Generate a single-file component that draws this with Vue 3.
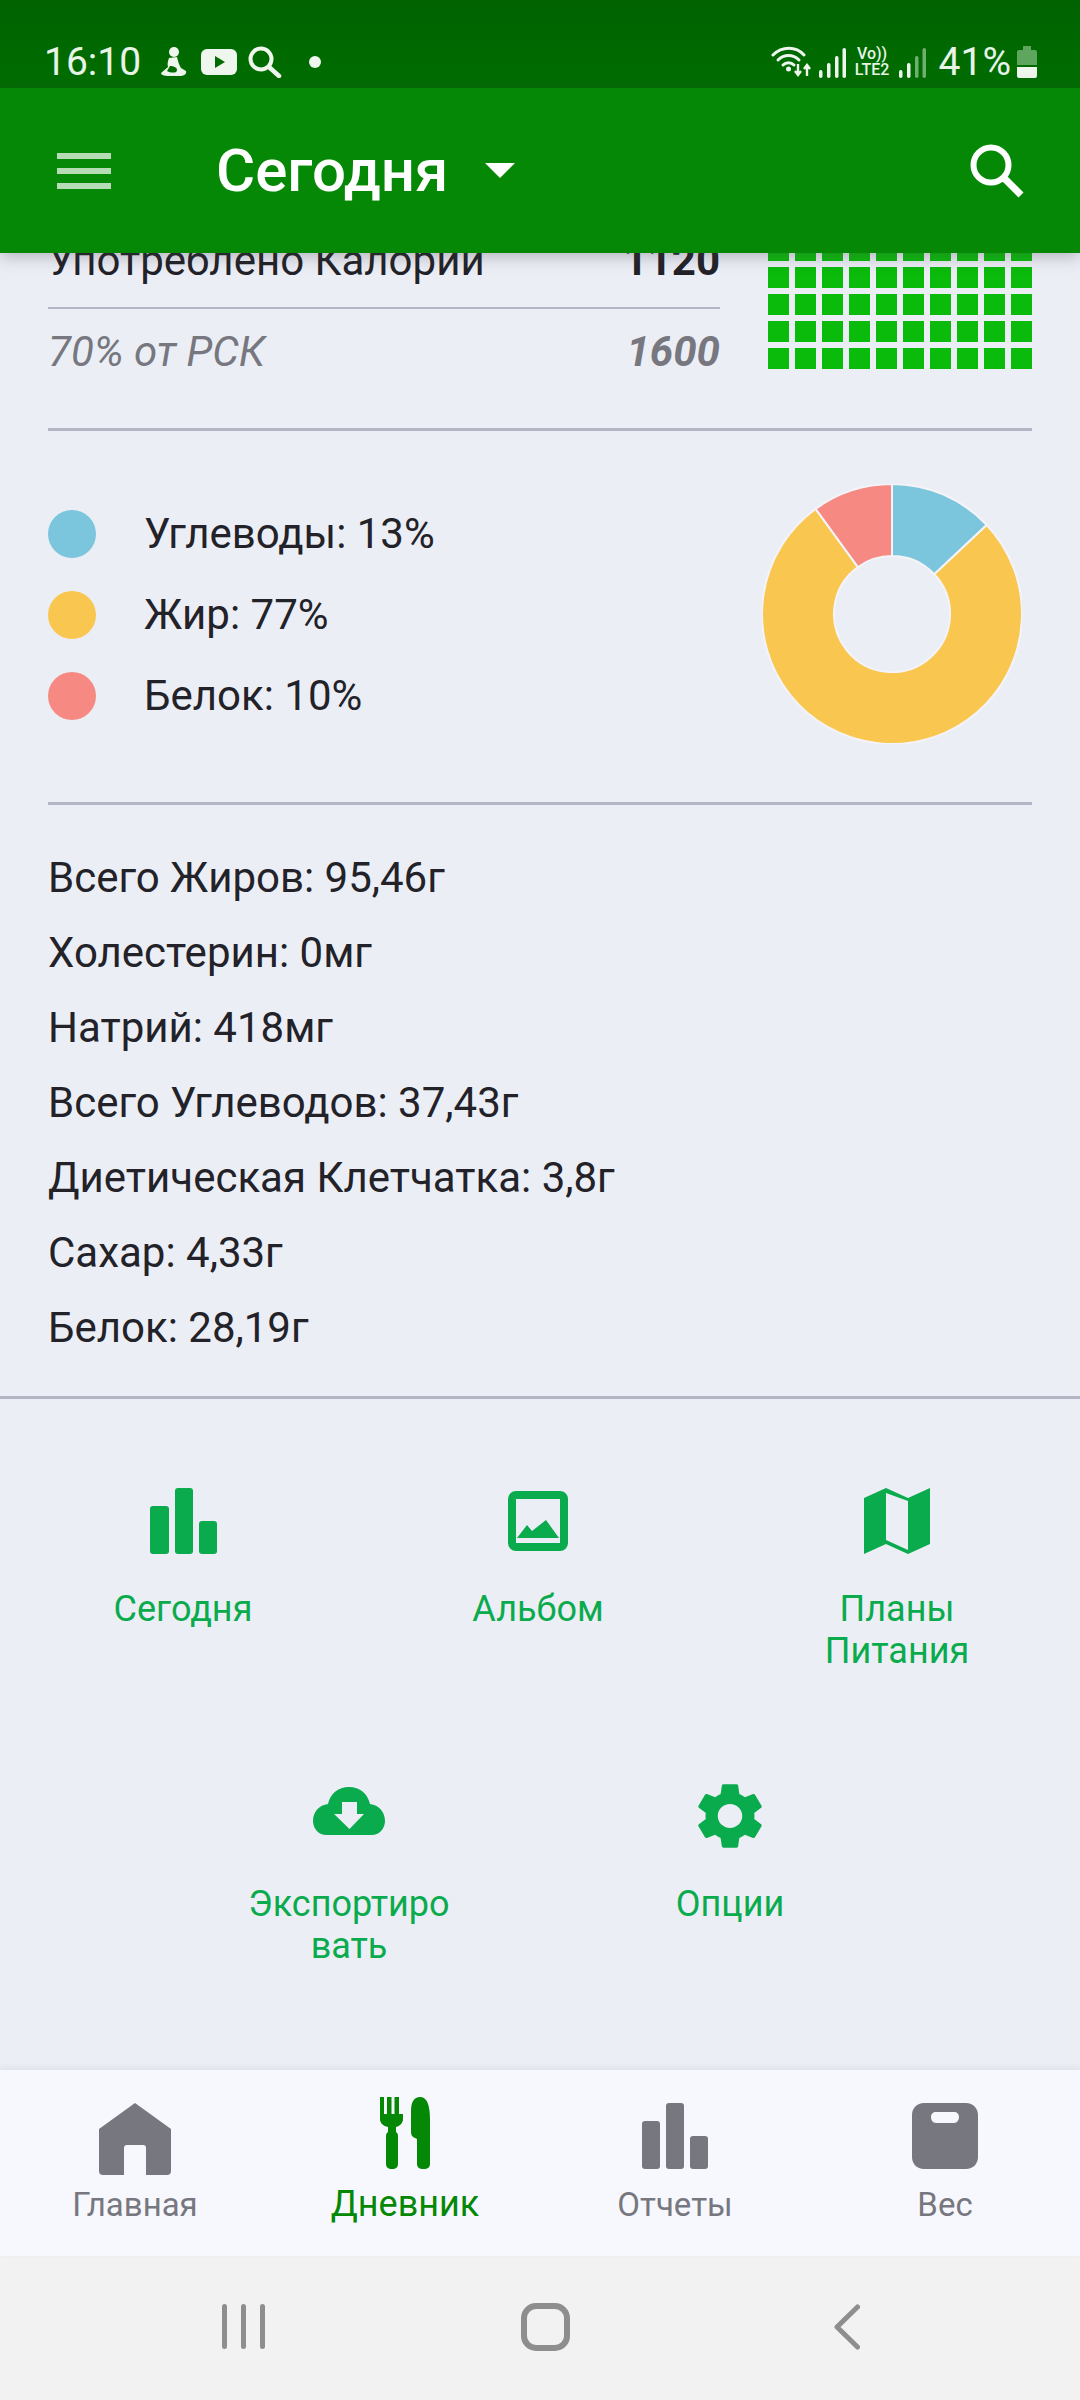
<script setup>
const macros = [
  { name: 'Углеводы', pct: 13, color: '#7bc5dd' },
  { name: 'Жир', pct: 77, color: '#f9c74f' },
  { name: 'Белок', pct: 10, color: '#f68a83' }
]

const nutrients = [
  'Всего Жиров: 95,46г',
  'Холестерин: 0мг',
  'Натрий: 418мг',
  'Всего Углеводов: 37,43г',
  'Диетическая Клетчатка: 3,8г',
  'Сахар: 4,33г',
  'Белок: 28,19г'
]

const cells = Array.from({ length: 50 }, (_, i) => i)

// donut slices, clockwise from 12 o'clock
const R = 130
const r = 58
function pt(rad, a) {
  return `${(130 + rad * Math.sin(a)).toFixed(2)} ${(130 - rad * Math.cos(a)).toFixed(2)}`
}
let acc = 0
const slices = macros.map(m => {
  const a0 = acc * Math.PI * 2
  acc += m.pct / 100
  const a1 = acc * Math.PI * 2
  const big = m.pct > 50 ? 1 : 0
  return {
    color: m.color,
    d: `M${pt(R, a0)}A${R} ${R} 0 ${big} 1 ${pt(R, a1)}L${pt(r, a1)}A${r} ${r} 0 ${big} 0 ${pt(r, a0)}Z`
  }
})
</script>

<template>
  <div class="phone">
    <div class="statusbar">
      <span class="time">16:10</span>
      <svg class="st-person" width="26" height="30" viewBox="0 0 26 30">
        <circle cx="13" cy="5" r="5" fill="#eef6ee" />
        <path fill="#eef6ee" d="M8 11l8-1c1 4 2 8 4 11l5 3c1 3-2 5-7 5H8c-5 0-8-1-8-3l7-6c-1-3 0-6 1-9z" />
        <path fill="#006c00" d="M9 19c3 0 7 1 7 4s-4 3-8 2l-2-1z" />
      </svg>
      <svg class="st-yt" width="36" height="26" viewBox="0 0 36 26">
        <rect width="36" height="26" rx="6" fill="#eef6ee" />
        <path d="M14 7l10 6-10 6z" fill="#006c00" />
      </svg>
      <svg class="st-search" width="34" height="32" viewBox="0 0 34 32">
        <circle cx="13" cy="13" r="10.500" fill="none" stroke="#eef6ee" stroke-width="4" />
        <path d="M21 21l10 9" stroke="#eef6ee" stroke-width="4.500" stroke-linecap="round" />
      </svg>
      <span class="st-dot"></span>
      <span class="st-spacer"></span>
      <svg class="st-wifi" width="42" height="32" viewBox="0 0 42 32">
        <g fill="none" stroke="#eef6ee" stroke-width="3" stroke-linecap="round">
          <path d="M2 9C11 0 25 0 33 9" />
          <path d="M7 14c6-6 15-6 21 0" />
          <path d="M12 19c3-3 8-3 11 0" />
        </g>
        <circle cx="17.500" cy="23" r="2.500" fill="#eef6ee" />
        <path d="M27 18v11M24 25l3 4 3-4M36 30V19M33 23l3-4 3 4" fill="none" stroke="#eef6ee" stroke-width="2.400" />
      </svg>
      <svg class="st-signal" width="27" height="30" viewBox="0 0 27 30">
        <rect x="0" y="22" width="3.500" height="8" rx="1.700" fill="#eef6ee" />
        <rect x="8" y="15" width="3.500" height="15" rx="1.700" fill="#eef6ee" />
        <rect x="16" y="8" width="3.500" height="22" rx="1.700" fill="#eef6ee" />
        <rect x="23.500" y="0" width="3.500" height="30" rx="1.700" fill="#eef6ee" />
      </svg>
      <span class="st-volte"><span>Vo))</span><span>LTE2</span></span>
      <svg class="st-signal2" width="27" height="30" viewBox="0 0 27 30">
        <rect x="0" y="22" width="3.500" height="8" rx="1.700" fill="#eef6ee" />
        <rect x="8" y="15" width="3.500" height="15" rx="1.700" fill="#eef6ee" />
        <rect x="16" y="8" width="3.500" height="22" rx="1.700" fill="#6fb06f" />
        <rect x="23.500" y="0" width="3.500" height="30" rx="1.700" fill="#6fb06f" />
      </svg>
      <span class="pct">41%</span>
      <svg class="st-batt" width="20" height="32" viewBox="0 0 20 32">
        <path d="M6 0h8v4h4a2 2 0 0 1 2 2v13H0V6a2 2 0 0 1 2-2h4z" fill="#5ea65e" />
        <path d="M0 21h20v9a2 2 0 0 1-2 2H2a2 2 0 0 1-2-2z" fill="#eef6ee" />
      </svg>
    </div>

    <header class="appbar">
      <div class="burger"><i></i><i></i><i></i></div>
      <span class="title">Сегодня</span>
      <span class="caret"></span>
      <span class="st-spacer"></span>
      <svg class="ab-search" width="54" height="54" viewBox="0 0 54 54">
        <circle cx="21" cy="21" r="17.500" fill="none" stroke="#fff" stroke-width="6" />
        <path d="M33 33l18 18" stroke="#fff" stroke-width="7" />
      </svg>
    </header>

    <main class="content">
      <div class="scroll">
        <section class="summary">
          <div class="sum-left">
            <div class="sum-row used"><span>Употреблено Калории</span><b>1120</b></div>
            <div class="sum-row rsk"><span>70% от РСК</span><b>1600</b></div>
          </div>
          <div class="cal-grid">
            <i v-for="c in cells" :key="c"></i>
          </div>
        </section>

        <section class="macros">
          <ul class="legend">
            <li v-for="m in macros" :key="m.name">
              <span class="swatch" :style="{ background: m.color }"></span>
              <span>{{ m.name }}: {{ m.pct }}%</span>
            </li>
          </ul>
          <svg class="donut" width="260" height="260" viewBox="0 0 260 260">
            <path v-for="s in slices" :key="s.color" :d="s.d" :fill="s.color" stroke="#f4f4f8" stroke-width="2" />
          </svg>
        </section>

        <section class="nutrients">
          <p v-for="n in nutrients" :key="n">{{ n }}</p>
        </section>

        <section class="actions">
          <div class="act-row first">
            <div class="act">
              <svg width="67" height="66" viewBox="0 0 67 66">
                <rect x="0" y="18" width="19" height="48" rx="3" />
                <rect x="25" y="0" width="18" height="66" rx="3" />
                <rect x="49" y="33" width="18" height="33" rx="3" />
              </svg>
              <span>Сегодня</span>
            </div>
            <div class="act">
              <svg width="60" height="66" viewBox="0 0 60 66">
                <rect x="4" y="7" width="52" height="52" rx="4" fill="none" stroke="#0aab4d" stroke-width="8" />
                <path d="M9 50l10-13 5 6 14-11 13 18z" />
              </svg>
              <span>Альбом</span>
            </div>
            <div class="act">
              <svg width="66" height="66" viewBox="0 0 66 66">
                <path fill-rule="evenodd" d="M0 10L22 0l22 10L66 0v56L44 66 22 56 0 66zM22 5v47l22 10V13z" />
              </svg>
              <span>Планы Питания</span>
            </div>
          </div>
          <div class="act-row second">
            <div class="act">
              <svg width="72" height="66" viewBox="0 0 72 66">
                <path d="M36 4c11 0 19 7 21 17 9 1 15 8 15 17 0 6-4 14-14 14H14C4 52 0 44 0 38c0-9 6-16 15-17C17 11 25 4 36 4z" />
                <path d="M29 19h15v12h7L36.500 46 21 31h8z" fill="#eceef6" />
              </svg>
              <span>Экспортировать</span>
            </div>
            <div class="act">
              <svg width="68" height="66" viewBox="2 2 20 20" preserveAspectRatio="none">
                <path d="M19.14 12.94c.04-.3.06-.61.06-.94 0-.32-.02-.64-.07-.94l2.03-1.58c.18-.14.23-.41.12-.61l-1.92-3.32c-.12-.22-.37-.29-.59-.22l-2.39.96c-.5-.38-1.03-.7-1.62-.94l-.36-2.54c-.04-.24-.24-.41-.48-.41h-3.84c-.24 0-.43.17-.47.41l-.36 2.54c-.59.24-1.13.57-1.62.94l-2.39-.96c-.22-.08-.47 0-.59.22L2.74 8.870c-.12.21-.08.47.12.61l2.030 1.580c-.05.3-.09.63-.09.94s.02.64.07.94l-2.030 1.580c-.18.14-.23.41-.12.61l1.920 3.320c.12.22.37.29.59.22l2.390-.96c.5.38 1.030.7 1.620.94l.36 2.540c.05.24.24.41.48.41h3.840c.24 0 .44-.17.47-.41l.36-2.540c.59-.24 1.130-.56 1.620-.94l2.390.96c.22.08.47 0 .59-.22l1.920-3.320c.12-.22.07-.47-.12-.61l-2.010-1.580zM12 15.600c-1.980 0-3.600-1.620-3.600-3.600s1.620-3.600 3.600-3.600 3.600 1.620 3.600 3.600-1.620 3.600-3.600 3.600z" />
              </svg>
              <span>Опции</span>
            </div>
          </div>
        </section>
      </div>
    </main>

    <nav class="tabs">
      <div class="tab">
        <svg width="72" height="72" viewBox="0 0 72 72">
          <path fill-rule="evenodd" d="M36 0l36 26v42a4 4 0 0 1-4 4H47V45a3 3 0 0 0-3-3H28a3 3 0 0 0-3 3v27H4a4 4 0 0 1-4-4V26z" />
        </svg>
        <span>Главная</span>
      </div>
      <div class="tab active">
        <svg width="50" height="72" viewBox="0 0 50 72">
          <path d="M0 0h4v17h3V0h4.500v17h3V0H19v17h4V0v22c0 4-3 7-7 8v5c2 1 2 3 2 5v27c0 3-2 5-6 5s-6-2-6-5V40c0-2 0-4 2-5v-5c-5-1-8-4-8-8z" />
          <path d="M40 0c7 0 10 8 10 22v45c0 3-2 5-6.500 5S37 70 37 67V42l-2-1c-3-1-4-3-4-6V14C31 5 34 0 40 0z" />
        </svg>
        <span>Дневник</span>
      </div>
      <div class="tab">
        <svg width="66" height="72" viewBox="0 0 66 72">
          <rect x="0" y="18" width="18" height="48" rx="3" />
          <rect x="24" y="0" width="18" height="66" rx="3" />
          <rect x="48" y="33" width="18" height="33" rx="3" />
        </svg>
        <span>Отчеты</span>
      </div>
      <div class="tab">
        <svg width="66" height="72" viewBox="0 0 66 72">
          <path fill-rule="evenodd" d="M12 0h42c7 0 12 5 12 12v42c0 7-5 12-12 12H12C5 66 0 61 0 54V12C0 5 5 0 12 0zM24 9c-3 0-5 2-5 5s2 6 5 6h18c3 0 5-3 5-6s-2-5-5-5z" />
        </svg>
        <span>Вес</span>
      </div>
    </nav>

    <div class="sysnav">
      <div class="recents"><i></i><i></i><i></i></div>
      <span class="homebtn"></span>
      <svg class="backbtn" width="26" height="46" viewBox="0 0 26 46">
        <path d="M23.500 3L3 23l20.500 20" fill="none" stroke="#8e8e8e" stroke-width="5" stroke-linecap="round" stroke-linejoin="round" />
      </svg>
    </div>
  </div>
</template>

<style scoped>
.phone {
  width: 1080px;
  height: 2400px;
  display: flex;
  flex-direction: column;
  background: #eceef6;
  font-family: Roboto, "Noto Sans", sans-serif;
  color: #222228;
  overflow: hidden;
}

.statusbar {
  height: 88px;
  flex: none;
  box-sizing: border-box;
  padding: 0 43px 8px 44px;
  display: flex;
  align-items: flex-end;
  background: linear-gradient(180deg, #006200, #006e00);
  color: #e8f4e8;
}
.time { font-size: 39px; line-height: 44px; width: 99px; margin-bottom: -4px; }
.st-person { margin: 0 0 3px 18px; }
.st-yt { margin: 0 0 5px 14px; }
.st-search { margin: 0 0 2px 11px; }
.st-dot { width: 12px; height: 12px; border-radius: 50%; background: #eef6ee; margin: 0 0 12px 27px; }
.st-spacer { flex: 1; }
.st-wifi { margin: 0 6px 2px 0; }
.st-signal { margin: 0 0 2px 0; }
.st-volte {
  display: flex;
  flex-direction: column;
  align-items: center;
  margin: 0 7px 2px 7px;
  font-size: 16px;
  line-height: 16px;
  font-weight: 500;
  width: 39px;
}
.st-signal2 { margin: 0 13px 2px 0; }
.pct { font-size: 39px; line-height: 44px; margin: 0 6px -4px 0; }
.st-batt { margin-bottom: 2px; }

.appbar {
  height: 165px;
  flex: none;
  position: relative;
  z-index: 2;
  box-sizing: border-box;
  padding: 0 56px 0 57px;
  display: flex;
  align-items: center;
  background: #058805;
  color: #fff;
  box-shadow: 0 3px 16px rgba(60, 60, 70, .35);
}
.burger { width: 54px; display: flex; flex-direction: column; gap: 9px; margin-right: 105px; }
.burger i { display: block; height: 6px; background: #b6dcb6; }
.title { font-size: 60px; font-weight: 500; line-height: 66px; }
.caret {
  width: 0;
  height: 0;
  margin-left: 37px;
  border-left: 15px solid transparent;
  border-right: 15px solid transparent;
  border-top: 15px solid #fff;
}
.ab-search { margin-right: 0; }

.content { flex: 1; min-height: 0; overflow: hidden; }
.scroll { margin-top: -13px; }

.summary {
  display: flex;
  justify-content: space-between;
  margin: 0 48px;
  border-bottom: 3px solid #b3b5c4;
  height: 191px;
  box-sizing: border-box;
  gap: 48px;
}
.sum-left { width: 672px; }
.sum-row {
  display: flex;
  justify-content: space-between;
  align-items: center;
  font-size: 42px;
}
.sum-row b { font-weight: 700; }
.used { height: 69px; box-sizing: border-box; border-bottom: 2px solid #b3b5c4; padding-bottom: 27px; }
.rsk { height: 72px; font-style: italic; color: #77777f; padding-top: 12px; box-sizing: border-box; }
.cal-grid {
  width: 264px;
  height: 132px;
  display: grid;
  grid-template-columns: repeat(10, 21px);
  grid-auto-rows: 21px;
  justify-content: space-between;
  row-gap: 6px;
}
.cal-grid i { display: block; background: #0bbb0b; }

.macros {
  display: flex;
  justify-content: space-between;
  align-items: center;
  margin: 0 48px;
  height: 374px;
  box-sizing: border-box;
  padding: 0 10px 4px 0;
  border-bottom: 3px solid #b3b5c4;
}
.legend { list-style: none; margin: 0; padding: 0; display: flex; flex-direction: column; gap: 33px; font-size: 42px; }
.legend li { display: flex; align-items: center; gap: 48px; height: 48px; }
.swatch { width: 48px; height: 48px; border-radius: 50%; flex: none; }
.donut { display: block; margin-bottom: 2px; }

.nutrients { padding: 35px 48px 31px; border-bottom: 3px solid #b3b5c4; }
.nutrients p { margin: 0; font-size: 42px; line-height: 75px; }

.actions { padding-top: 89px; }
.act-row { display: flex; height: 295px; align-items: flex-start; }
.first { padding-left: 78px; }
.first .act:nth-child(2) { margin-left: 145px; }
.first .act:nth-child(3) { margin-left: 149px; }
.second { padding-left: 244px; }
.second .act:nth-child(2) { margin-left: 171px; }
.act {
  width: 210px;
  display: flex;
  flex-direction: column;
  align-items: center;
  gap: 34px;
  text-align: center;
  color: #0aab4d;
  font-size: 36px;
  line-height: 42px;
  overflow-wrap: anywhere;
}
.act svg { display: block; fill: #0aab4d; }

.tabs {
  height: 186px;
  flex: none;
  position: relative;
  z-index: 2;
  box-sizing: border-box;
  padding-top: 33px;
  display: grid;
  grid-template-columns: repeat(4, 270px);
  background: #f7f8fe;
  box-shadow: 0 -2px 6px rgba(60, 60, 70, .08);
}
.tab {
  display: flex;
  flex-direction: column;
  align-items: center;
  gap: 12px;
  color: #77777f;
  font-size: 33px;
  line-height: 36px;
}
.tab svg { display: block; fill: #77777f; }
.tab.active { color: #058805; font-size: 36px; margin-top: -6px; gap: 17px; }
.tab.active svg { fill: #058805; }

.sysnav {
  height: 144px;
  flex: none;
  box-sizing: border-box;
  position: relative;
  display: flex;
  align-items: center;
  padding: 0 0 3px 222px;
  background: #f2f2f2;
}
.recents { display: flex; gap: 14px; }
.recents i { display: block; width: 5px; height: 45px; border-radius: 3px; background: #8e8e8e; }
.homebtn {
  width: 49px;
  height: 48px;
  box-sizing: border-box;
  margin-left: 256px;
  border: 6px solid #8e8e8e;
  border-radius: 15px;
}
.backbtn { margin-left: 264px; }
</style>

<style>
html, body { margin: 0; background: #eceef6; }
</style>
